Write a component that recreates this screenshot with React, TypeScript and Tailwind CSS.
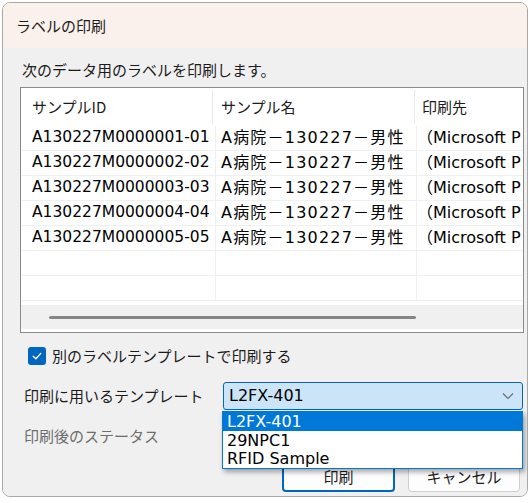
import React from "react";

const ids = [
  "A130227M0000001-01",
  "A130227M0000002-02",
  "A130227M0000003-03",
  "A130227M0000004-04",
  "A130227M0000005-05",
];

function Row({ id }: { id?: string }) {
  return (
    <div className="flex h-[25px] border-b border-[#f0f0f0] items-center whitespace-nowrap">
      <div className="w-[195px] h-full border-r border-[#f0f0f0] pl-[11px] flex items-center overflow-hidden text-[15.5px]">{id ?? ""}</div>
      <div className="w-[201px] h-full border-r border-[#f0f0f0] pl-[5px] flex items-center overflow-hidden tracking-[1.2px]">{id ? "A病院－130227－男性" : ""}</div>
      <div className="flex-1 h-full pl-0 flex items-center overflow-hidden">{id ? "（Microsoft P" : ""}</div>
    </div>
  );
}

export default function App() {
  const jp = "font-['Noto_Sans_CJK_JP',sans-serif]";
  const mono = "font-['DejaVu_Sans','Noto_Sans_CJK_JP',sans-serif]";
  return (
    <div className="w-[531px] h-[503px] bg-white pt-[2px] pl-[2px] overflow-hidden">
      <div className={`w-[526px] h-[495px] rounded-[8px] border border-[#a8a8a8] overflow-hidden flex flex-col ${jp} text-[#1b1b1b]`}>
        <div className="h-[45px] bg-[#faf1ec] pl-[13px] flex items-center text-[15px] leading-none">ラベルの印刷</div>
        <div className="flex-1 bg-[#f0f0f0] pl-[17px] flex flex-col">
          <div className="mt-[12px] text-[15px] leading-[20px] pl-[2px]">次のデータ用のラベルを印刷します。</div>
          <div className="mt-[7px] w-[504px] h-[246px] border border-[#8a8a8a] bg-white flex flex-col overflow-hidden">
            <div className="flex h-[38px] py-[2px] text-[15px] whitespace-nowrap">
              <div className="w-[192px] border-r border-[#e8e8e8] pl-[11px] flex items-center">サンプルID</div>
              <div className="w-[202px] border-r border-[#e8e8e8] pl-[8px] flex items-center">サンプル名</div>
              <div className="flex-1 pl-[7px] flex items-center">印刷先</div>
            </div>
            <div className={`${mono} text-[16px] text-black`}>
              {ids.map((id) => (
                <Row key={id} id={id} />
              ))}
              <Row />
              <Row />
            </div>
            <div className="flex-1" />
            <div className="h-[24px] mb-[3px] bg-[#f0f0f0] flex items-center">
              <div className="ml-[28px] w-[367px] h-[3px] rounded-full bg-[#858585]" />
            </div>
          </div>
          <div className="mt-[13px] flex items-center ml-[8px]">
            <div className="w-[18px] h-[18px] rounded-[3px] bg-[#0067c0] flex items-center justify-center">
              <svg width="12" height="12" viewBox="0 0 12 12">
                <path d="M2.2 6.3 L4.9 8.8 L9.8 3.4" fill="none" stroke="white" strokeWidth="1.4" strokeLinecap="round" strokeLinejoin="round" />
              </svg>
            </div>
            <span className="ml-[6px] text-[15px] leading-[20px]">別のラベルテンプレートで印刷する</span>
          </div>
          <div className="mt-[16px] flex items-center">
            <span className="w-[203px] pl-[4px] text-[15px] leading-[20px]">印刷に用いるテンプレート</span>
            <div className="relative">
              <div className={`w-[300px] h-[28px] rounded-[3px] border border-[#0067c0] bg-[#cce4f7] flex items-center pl-[5px] ${mono} text-[16px] text-black`}>
                L2FX-401
                <svg className="ml-auto mr-[8px]" width="12" height="8" viewBox="0 0 12 8">
                  <path d="M1 1.5 L6 6.5 L11 1.5" fill="none" stroke="#6b6b6b" strokeWidth="1.1" />
                </svg>
              </div>
              <div className={`absolute left-[-1px] top-[29px] w-[301px] h-[58px] border border-[#0078d7] bg-white shadow-[2px_3px_5px_rgba(0,0,0,0.35)] z-10 ${mono} text-[16px] text-black`}>
                <div className="h-[19px] bg-[#0078d7] text-white pl-[4px] flex items-center leading-none">L2FX-401</div>
                <div className="h-[19px] pl-[4px] flex items-center leading-none">29NPC1</div>
                <div className="h-[18px] pl-[4px] flex items-center leading-none">RFID Sample</div>
              </div>
            </div>
          </div>
          <div className="mt-[12px] h-[28px] flex items-center pl-[4px] text-[15px] text-[#6d6d6d]">印刷後のステータス</div>
          <div className="mt-[10px] flex gap-[13px] pl-[262px]">
            <button className="w-[113px] h-[32px] rounded-[4px] border-2 border-[#0067c0] bg-[#fdfdfd] text-[15px] leading-none">印刷</button>
            <button className="w-[112px] h-[32px] rounded-[4px] border border-[#d0d0d0] bg-[#fdfdfd] text-[15px] leading-none">キャンセル</button>
          </div>
        </div>
      </div>
    </div>
  );
}
